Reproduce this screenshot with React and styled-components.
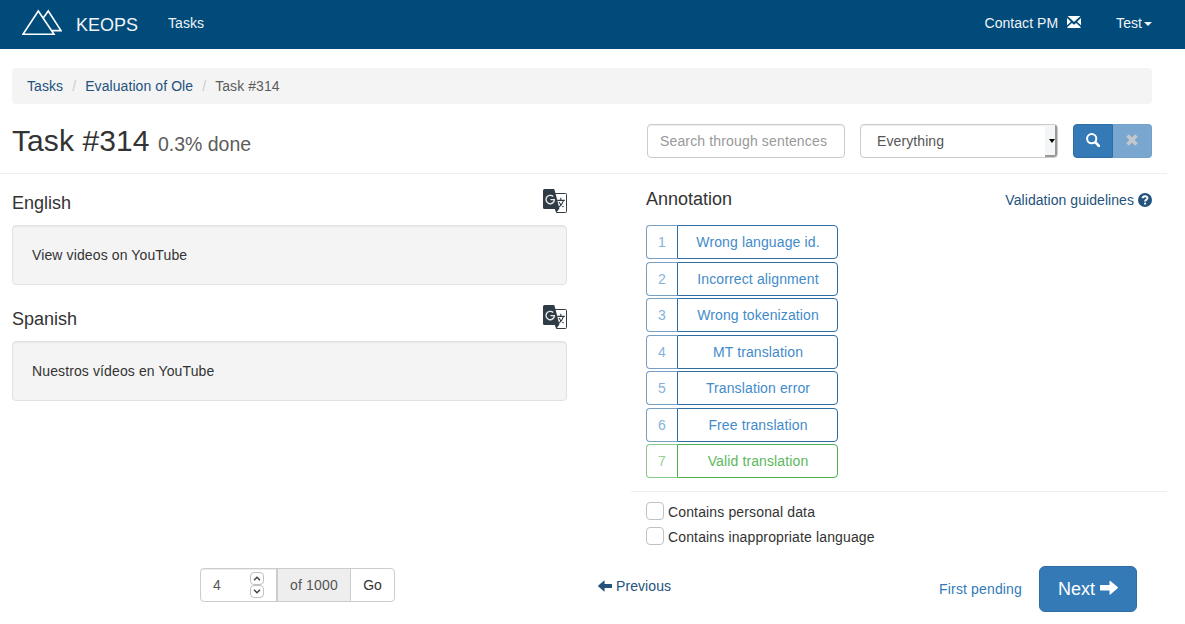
import React from "react";
import styled, { createGlobalStyle } from "styled-components";

const GlobalStyle = createGlobalStyle`
  * { box-sizing: border-box; }
  body {
    margin: 0;
    background: #fff;
    color: #333;
    font: 14px/20px "Liberation Sans", Arial, sans-serif;
  }
  button, input { font: inherit; letter-spacing: inherit; }
`;

const Navbar = styled.nav`
  display: flex;
  align-items: flex-start;
  height: 49px;
  padding: 0 33px 0 22px;
  background: #004b7a;
  color: #f0f4f7;
`;
const Logo = styled.svg`
  margin-top: 9px;
`;
const Brand = styled.div`
  margin: 15px 30px 0 14px;
  width: 62px;
  font-size: 18px;
`;
const NavItem = styled.a`
  display: flex;
  align-items: center;
  padding-top: 13px;
  margin-left: ${(p) => p.$push || "0"};
  letter-spacing: 0.05px;
`;
const MailIcon = styled.svg`
  margin: -2px 0 0 9px;
`;
const Caret = styled.span`
  margin: 2px 0 0 2px;
  border: 4px solid transparent;
  border-top-color: currentColor;
  border-bottom: 0;
`;

const Breadcrumb = styled.ol`
  display: flex;
  list-style: none;
  margin: 19px 33px 20px 12px;
  padding: 8px 15px;
  height: 36px;
  background: #f4f4f4;
  border-radius: 4px;
  letter-spacing: 0.08px;
`;
const Crumb = styled.li`
  color: ${(p) => (p.$current ? "#5c5c5c" : "#23527c")};
  &:not(:first-child)::before {
    content: "/";
    color: #ccc;
    padding: 0 9px;
  }
`;

const Header = styled.header`
  display: flex;
  height: 50px;
  width: 1167px;
  padding: 0 15px 0 12px;
  border-bottom: 1px solid #eee;
`;
const Title = styled.h2`
  flex: 1;
  margin: 0;
  font-size: 30px;
  font-weight: 400;
  line-height: 33px;
  letter-spacing: 0.08px;
`;
const Progress = styled.small`
  font-size: 19.5px;
  letter-spacing: 0;
  color: #5c5c5c;
`;
const SearchInput = styled.input`
  width: 198px;
  height: 34px;
  padding: 6px 12px;
  letter-spacing: 0.15px;
  border: 1px solid #ccc;
  border-radius: 4px;
  box-shadow: inset 0 1px 1px rgba(0, 0, 0, 0.075);
  &::placeholder { color: #999; opacity: 1; }
`;
const Select = styled.div`
  display: flex;
  justify-content: space-between;
  width: 198px;
  height: 34px;
  margin: 0 15px;
  padding-left: 16px;
  line-height: 32px;
  letter-spacing: 0.1px;
  color: #555;
  border: 1px solid #ccc;
  border-radius: 4px;
  box-shadow: inset 0 1px 1px rgba(0, 0, 0, 0.075);
`;
const SelectArrow = styled.span`
  display: flex;
  align-items: center;
  justify-content: flex-end;
  width: 12px;
  background: #f3f5f6;
  border-right: 2px solid #999;
  border-bottom: 2px solid #999;
  border-radius: 0 2px 3px 0;
  &::after {
    content: "";
    margin-top: 1px;
    border: 3px solid transparent;
    border-top: 4px solid #000;
    border-bottom: 0;
  }
`;
const ButtonGroup = styled.div`
  display: flex;
`;
const IconButton = styled.button`
  display: flex;
  align-items: center;
  justify-content: center;
  width: ${(p) => (p.$faded ? "39px" : "40px")};
  height: 34px;
  padding: 0 0 2px;
  color: ${(p) => (p.$faded ? "#c3c8cc" : "#fff")};
  background: ${(p) => (p.$faded ? "#79a7d0" : "#337ab7")};
  border: 1px solid ${(p) => (p.$faded ? "#72a1cb" : "#2e6da4")};
  border-left-width: ${(p) => (p.$faded ? "0" : "1px")};
  border-radius: ${(p) => (p.$faded ? "0 4px 4px 0" : "4px 0 0 4px")};
`;

const Columns = styled.main`
  display: flex;
  width: 1167px;
`;
const Sentences = styled.section`
  width: 555px;
  margin: 15px 64px 0 12px;
`;
const LanguageRow = styled.div`
  display: flex;
  justify-content: space-between;
  height: 36px;
`;
const Heading = styled.h4`
  margin: 0;
  font-size: 18px;
  font-weight: 400;
  line-height: 20px;
`;
const LanguageName = styled(Heading)`
  margin-top: 4px;
`;
const Well = styled.div`
  height: 60px;
  margin-bottom: 20px;
  padding: 19px;
  letter-spacing: 0.12px;
  background: #f4f4f4;
  border: 1px solid #e2e2e2;
  border-radius: 4px;
  box-shadow: inset 0 1px 1px rgba(0, 0, 0, 0.05);
`;

const Annotation = styled.section`
  flex: 1;
`;
const AnnotationHead = styled.div`
  display: flex;
  justify-content: space-between;
  padding: 15px 15px 0;
  height: 51px;
`;
const Guidelines = styled.a`
  display: flex;
  align-items: center;
  gap: 4px;
  height: 22px;
  letter-spacing: 0.06px;
  color: #23527c;
`;
const Options = styled.div`
  display: flex;
  flex-direction: column;
  gap: 2.5px;
  padding: 0 15px 13px;
  border-bottom: 1px solid #eee;
`;
const Option = styled.div`
  display: flex;
  width: 192px;
  height: 34px;
  line-height: 32px;
  letter-spacing: 0.12px;
  text-align: center;
  color: ${(p) => (p.$valid ? "#5cb85c" : "#428bca")};
`;
const OptionKey = styled.span`
  width: 31px;
  border: 1px solid ${(p) => (p.$valid ? "#4cae4c" : "#2e6da4")};
  border-right: 0;
  border-radius: 4px 0 0 4px;
  opacity: 0.65;
`;
const OptionLabel = styled.span`
  flex: 1;
  padding-left: 1px;
  border: 1px solid ${(p) => (p.$valid ? "#4cae4c" : "#2e6da4")};
  border-radius: 0 4px 4px 0;
`;
const Checks = styled.div`
  display: flex;
  flex-direction: column;
  gap: 5px;
  padding: 10px 15px 0;
`;
const Check = styled.label`
  display: flex;
  gap: 4px;
  height: 20px;
  letter-spacing: 0.14px;
`;
const Box = styled.span`
  width: 18px;
  height: 18px;
  border: 1px solid #bfc1c8;
  border-radius: 4px;
`;

const Footer = styled.footer`
  display: flex;
  align-items: flex-start;
  padding: 19px 48px 0 200px;
`;
const Pager = styled.div`
  display: flex;
  width: 195px;
  height: 34px;
  margin-top: 2px;
  border: 1px solid #ccc;
  border-radius: 4px;
  line-height: 32px;
  color: #555;
`;
const PageNumber = styled.div`
  display: flex;
  justify-content: space-between;
  width: 77px;
  padding: 0 12px;
  border-right: 2px solid #ccc;
  box-shadow: inset 0 1px 1px rgba(0, 0, 0, 0.075);
`;
const Spinner = styled.div`
  display: flex;
  flex-direction: column;
  margin-top: 3px;
`;
const Step = styled.span`
  display: flex;
  align-items: center;
  justify-content: center;
  width: 14px;
  height: 13px;
  border: 1px solid #bfc1c8;
  border-radius: 4px;
`;
const PageTotal = styled.div`
  width: 73px;
  text-align: center;
  letter-spacing: 0.15px;
  background: #eee;
  border-right: 1px solid #ccc;
`;
const Go = styled.div`
  flex: 1;
  text-align: center;
  color: #333;
`;
const Previous = styled.a`
  display: flex;
  align-items: center;
  gap: 4px;
  margin: 10px 0 0 203px;
  letter-spacing: 0.08px;
  color: #23527c;
`;
const FirstPending = styled.a`
  margin: 13px 17px 0 auto;
  letter-spacing: 0.15px;
  color: #337ab7;
`;
const Next = styled.button`
  display: flex;
  align-items: center;
  justify-content: center;
  gap: 5px;
  width: 98px;
  height: 46px;
  padding: 0 0 1px;
  font-size: 18px;
  color: #fff;
  background: #337ab7;
  border: 1px solid #2e6da4;
  border-radius: 6px;
`;
const NextArrow = styled.span`
  display: flex;
  margin-top: -2px;
`;

const Arrow = ({ size, left }) => (
  <svg width={size} height={(size * 12) / 14} viewBox="0 0 14 12" fill="currentColor">
    <path
      transform={left ? "matrix(-1 0 0 1 14 0)" : undefined}
      d="M.5 3.9H7.4V1.1Q7.4 .2 8.1 .7L13.7 5.5Q14.1 6 13.7 6.5L8.1 11.3Q7.4 11.8 7.4 10.9V8.1H.5Q0 8.1 0 7.6V4.4Q0 3.9 .5 3.9Z"
    />
  </svg>
);

const Chevron = ({ down }) => (
  <svg width="8" height="5" viewBox="0 0 8 5" fill="none" stroke="#444" strokeWidth="1.5">
    <path d={down ? "M1 .8 4 3.8 7 .8" : "M1 4.2 4 1.2 7 4.2"} />
  </svg>
);

const TranslateIcon = () => (
  <svg width="24" height="24" viewBox="0 0 24 24" fill="none">
    <path d="M11 4.5H22.5Q23.5 4.5 23.5 5.5V22.5Q23.5 23.5 22.5 23.5H13.5" stroke="#2f3c45" />
    <path d="M1.5 0H11.2L12.4 4 16.4 19.4 13.2 24 11.8 20H1.5Q0 20 0 18.5V1.5Q0 0 1.5 0Z" fill="#2f3c45" />
    <path d="M10.2 7.6A4.2 4.2 0 1 0 11.4 10.6H7.4" stroke="#e8eaec" strokeWidth="1.4" />
    <path d="M17.8 8.8V10.8M14.2 11.4H21.8M20.4 11.6Q19.2 16 15.6 18.4M16 13Q17.8 16.6 20.6 18" stroke="#2f3c45" strokeWidth="1.1" />
  </svg>
);

const labels = [
  "Wrong language id.",
  "Incorrect alignment",
  "Wrong tokenization",
  "MT translation",
  "Translation error",
  "Free translation",
  "Valid translation",
];

const sentences = [
  ["English", "View videos on YouTube"],
  ["Spanish", "Nuestros vídeos en YouTube"],
];

export default function App() {
  return (
    <>
      <GlobalStyle />
      <Navbar>
        <Logo width="40" height="28" viewBox="0 0 40 28" fill="none" stroke="#fff" strokeWidth="1.6">
          <path d="M1 25.3 16.3 2 32 25.3ZM21.4 8.8 26.3 2 39 21.6H30" />
        </Logo>
        <Brand>KEOPS</Brand>
        <NavItem>Tasks</NavItem>
        <NavItem $push="auto">
          Contact PM
          <MailIcon width="14" height="12" viewBox="0 0 14 12" fill="#fff">
            <path d="M.6 0H13.4L7 6ZM0 2 3.9 5.7 0 9.2ZM14 2 10.1 5.7 14 9.2ZM4.9 6.9 7 8.8 9.1 6.9 13.6 11V12H.4V11Z" />
          </MailIcon>
        </NavItem>
        <NavItem $push="35px">
          Test
          <Caret />
        </NavItem>
      </Navbar>

      <Breadcrumb>
        <Crumb>Tasks</Crumb>
        <Crumb>Evaluation of Ole</Crumb>
        <Crumb $current>Task #314</Crumb>
      </Breadcrumb>

      <Header>
        <Title>
          Task #314 <Progress>0.3% done</Progress>
        </Title>
        <SearchInput placeholder="Search through sentences" />
        <Select>
          Everything
          <SelectArrow />
        </Select>
        <ButtonGroup>
          <IconButton>
            <svg width="14" height="14" viewBox="0 0 14 14" fill="none" stroke="#fff">
              <circle cx="5.7" cy="5.7" r="4.6" strokeWidth="2" />
              <path d="M9.2 9.2 13 13" strokeWidth="2.6" strokeLinecap="round" />
            </svg>
          </IconButton>
          <IconButton $faded>
            <svg width="12" height="12" viewBox="0 0 12 12" stroke="currentColor" strokeWidth="3.8">
              <path d="M1.5 1.5 10.5 10.5M10.5 1.5 1.5 10.5" />
            </svg>
          </IconButton>
        </ButtonGroup>
      </Header>

      <Columns>
        <Sentences>
          {sentences.map(([language, text]) => (
            <React.Fragment key={language}>
              <LanguageRow>
                <LanguageName>{language}</LanguageName>
                <TranslateIcon />
              </LanguageRow>
              <Well>{text}</Well>
            </React.Fragment>
          ))}
        </Sentences>
        <Annotation>
          <AnnotationHead>
            <Heading>Annotation</Heading>
            <Guidelines>
              Validation guidelines
              <svg width="14" height="14" viewBox="0 0 14 14">
                <circle cx="7" cy="7" r="7" fill="#23527c" />
                <path d="M4.6 5.3C4.7 2.6 9.6 2.6 9.5 5.2 9.4 6.7 7.1 6.6 7.1 8.6" fill="none" stroke="#fff" strokeWidth="1.9" />
                <path d="M6.1 9.6H8.1V11.5H6.1Z" fill="#fff" />
              </svg>
            </Guidelines>
          </AnnotationHead>
          <Options>
            {labels.map((label, i) => (
              <Option key={label} $valid={i === 6}>
                <OptionKey $valid={i === 6}>{i + 1}</OptionKey>
                <OptionLabel $valid={i === 6}>{label}</OptionLabel>
              </Option>
            ))}
          </Options>
          <Checks>
            <Check>
              <Box />
              Contains personal data
            </Check>
            <Check>
              <Box />
              Contains inappropriate language
            </Check>
          </Checks>
        </Annotation>
      </Columns>

      <Footer>
        <Pager>
          <PageNumber>
            4
            <Spinner>
              <Step><Chevron /></Step>
              <Step><Chevron down /></Step>
            </Spinner>
          </PageNumber>
          <PageTotal>of 1000</PageTotal>
          <Go>Go</Go>
        </Pager>
        <Previous>
          <Arrow size={14} left />
          Previous
        </Previous>
        <FirstPending>First pending</FirstPending>
        <Next>
          Next
          <NextArrow>
            <Arrow size={18} />
          </NextArrow>
        </Next>
      </Footer>
    </>
  );
}
